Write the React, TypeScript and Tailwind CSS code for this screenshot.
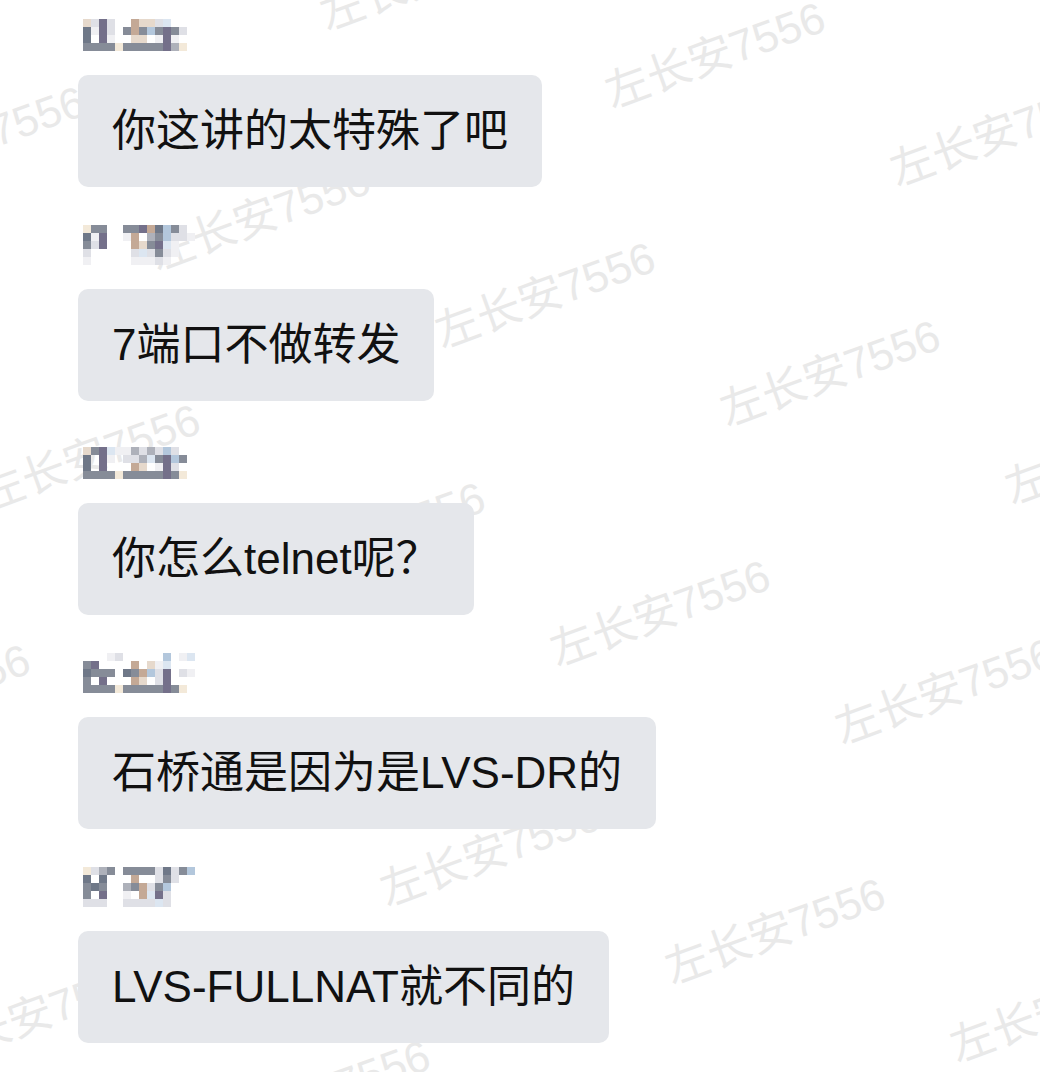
const PAL: Record<string, string> = {
  '.': 'bg-transparent',
  w: 'bg-[#f0f0f3]',
  l: 'bg-[#dfe0e6]',
  m: 'bg-[#aeb1ba]',
  g: 'bg-[#868c98]',
  d: 'bg-[#6f7888]',
  p: 'bg-[#74708a]',
  t: 'bg-[#c4a996]',
  u: 'bg-[#e6d9cc]',
  b: 'bg-[#b3c7dc]',
  c: 'bg-[#dce6f1]',
  y: 'bg-[#f3e9d9]',
};

// pixelated sender names, one letter per 8px cell
const MESSAGES = [
  {
    name: ['ulpl..tuulc...', 'dwpl.gtgbgpgl.', 'd.pw..uu.wpw..', 'ggggygggggpmy.'],
    text: '你这讲的太特殊了吧',
  },
  {
    name: ['ygg..ggptdbgl.', 'dwp..wt.mgbllw', 'glp...tugpcw..', 'l.....lclglw..', 'w.....wwwlw...'],
    text: '7端口不做转发',
  },
  {
    name: ['ugpcwwmlmlbl..', 'd.pw.llmcgpbg.', 'd.p...tu.wpl..', 'ggggygggggpgy.'],
    text: '你怎么telnet呢？',
  },
  {
    name: ['...wl.....b.wc', 'gp....t.uwc...', 'dggg.dgtblp.lw', 'g.p...tu.lp...', 'ggggygggggpgy.'],
    text: '石桥通是因为是LVS-DR的',
  },
  {
    name: ['ylmg.ggggldlgb', 'd.d...t..lgl..', 'gdg..mgtlgb...', 'g.p..w.tcpl...', 'lll..llllcl...'],
    text: 'LVS-FULLNAT就不同的',
  },
];

function MosaicName({ rows }: { rows: string[] }) {
  return (
    <div className="ml-[5px] flex h-[32px] flex-col justify-end">
      {rows.map((row, i) => (
        <div key={i} className="flex">
          {row.split('').map((ch, j) => (
            <div key={j} className={`h-[8px] w-[8px] ${PAL[ch]}`} />
          ))}
        </div>
      ))}
    </div>
  );
}

function Watermarks() {
  const marks: { x: number; y: number }[] = [];
  for (let n = -3; n <= 4; n++) {
    for (let m = -5; m <= 3; m++) {
      const x = 715 + n * 115 + m * 170;
      const y = 55 + n * 318 - m * 240;
      if (x > -200 && x < 1250 && y > -150 && y < 1230) marks.push({ x, y });
    }
  }
  return (
    <div className="pointer-events-none absolute inset-0 overflow-hidden">
      {marks.map(({ x, y }) => (
        <span
          key={`${x}-${y}`}
          className="absolute -translate-x-1/2 -translate-y-1/2 -rotate-20 whitespace-nowrap text-[44px] leading-none text-[#e9e9e9]"
          style={{ left: x, top: y }}
        >
          左长安7556
        </span>
      ))}
    </div>
  );
}

export default function App() {
  return (
    <div className="relative min-h-[1072px] w-full overflow-hidden bg-white font-['Liberation_Sans','Noto_Sans_CJK_SC',sans-serif]">
      <Watermarks />
      <div className="relative flex flex-col gap-[46px] pl-[78px] pt-[19px]">
        {MESSAGES.map((msg, i) => (
          <div key={i} className="flex flex-col items-start gap-[24px]">
            <MosaicName rows={msg.name} />
            <div className="rounded-[10px] bg-[#e5e7eb] px-[34px] py-[24px] text-[44px] leading-[64px] text-[#111]">
              {msg.text}
            </div>
          </div>
        ))}
      </div>
    </div>
  );
}
